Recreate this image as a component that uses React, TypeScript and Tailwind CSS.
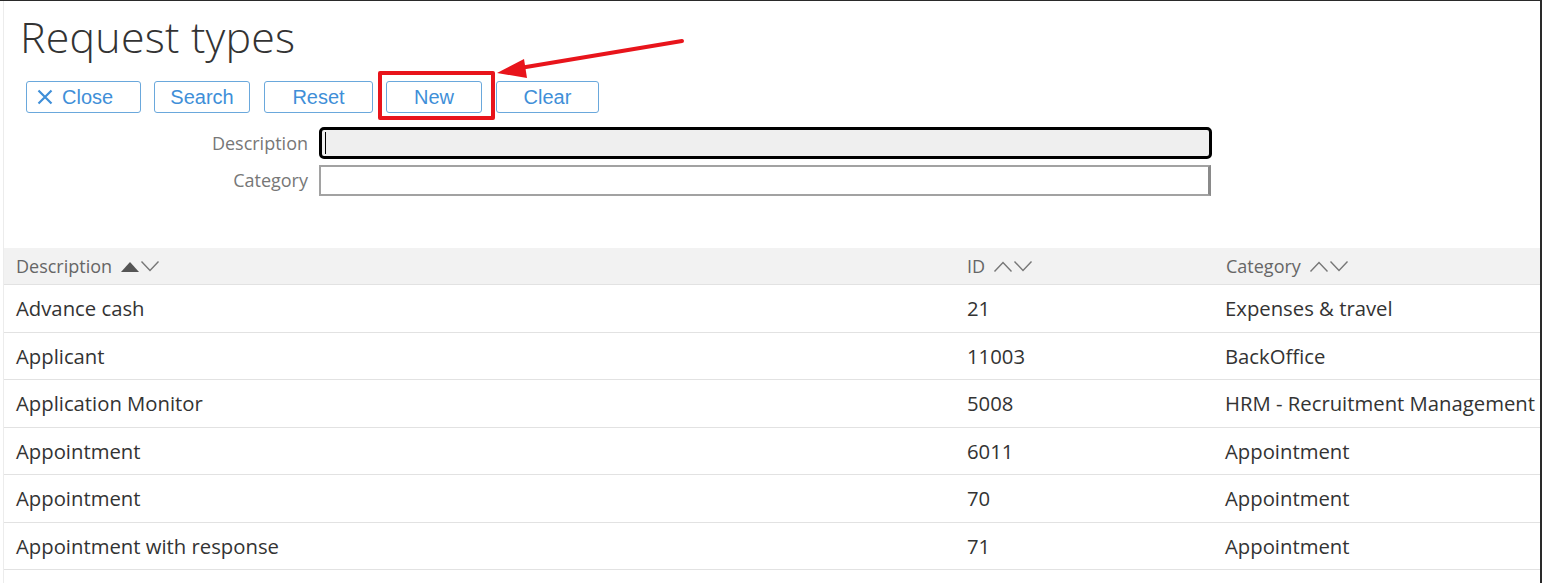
import React from "react";

const font = { fontFamily: '"Open Sans", "Noto Sans", sans-serif' };

function Up({ filled }: { filled?: boolean }) {
  return filled ? (
    <svg width="20" height="13" viewBox="0 0 20 13" className="inline-block">
      <path d="M1 12 L10 2 L19 12 Z" fill="#555" />
    </svg>
  ) : (
    <svg width="20" height="13" viewBox="0 0 20 13" className="inline-block">
      <path d="M1.5 11.5 L10 2.5 L18.5 11.5" fill="none" stroke="#777" strokeWidth="1.4" />
    </svg>
  );
}
function Down() {
  return (
    <svg width="20" height="13" viewBox="0 0 20 13" className="inline-block">
      <path d="M1.5 1.5 L10 10.5 L18.5 1.5" fill="none" stroke="#777" strokeWidth="1.4" />
    </svg>
  );
}

const rows = [
  ["Advance cash", "21", "Expenses & travel"],
  ["Applicant", "11003", "BackOffice"],
  ["Application Monitor", "5008", "HRM - Recruitment Management"],
  ["Appointment", "6011", "Appointment"],
  ["Appointment", "70", "Appointment"],
  ["Appointment with response", "71", "Appointment"],
];

function Btn({ children, w, left }: { children: React.ReactNode; w: string; left?: boolean }) {
  return (
    <button
      className={`${w} h-[32px] border border-[#6aa8dc] rounded-[3px] bg-white text-[#3f8fd8] text-[20px] flex items-center ${left ? "justify-start pl-[10px] gap-[9px]" : "justify-center"}`}
      style={{ fontFamily: '"Liberation Sans", Arial, sans-serif' }}
    >
      {children}
    </button>
  );
}

export default function App() {
  return (
    <div className="relative w-[1542px] h-[583px] overflow-hidden bg-white border-t border-t-[#2a2a2a] border-r-2 border-r-[#2a2a2a]" style={font}>
      <div className="h-full ml-[3px] border-l border-l-[#ececec]">
        <h1 className="pl-[16px] pt-[10px] text-[43px] leading-[52px] font-light text-[#333] tracking-[0.2px]">Request types</h1>
        <div className="flex pl-[22px] mt-[18px] gap-0">
          <Btn w="w-[115px]" left>
            <svg width="16" height="16" viewBox="0 0 16 16"><path d="M1.5 1.5 L14.5 14.5 M14.5 1.5 L1.5 14.5" stroke="#3f8fd8" strokeWidth="2.2" /></svg>
            <span>Close</span>
          </Btn>
          <div className="ml-[13px]"><Btn w="w-[96px]">Search</Btn></div>
          <div className="ml-[14px]"><Btn w="w-[109px]">Reset</Btn></div>
          <div className="ml-[13px]"><Btn w="w-[96px]">New</Btn></div>
          <div className="ml-[14px]"><Btn w="w-[103px]">Clear</Btn></div>
        </div>
        <div className="mt-[14px] flex flex-col gap-[6px]">
          <div className="flex items-center">
            <label className="w-[315px] text-right pr-[11px] text-[18px] text-[#777]">Description</label>
            <div className="w-[893px] h-[32px] border-[3px] border-black rounded-[5px] bg-[#efefef] flex items-center pl-[3px]">
              <div className="w-[1px] h-[22px] bg-black" />
            </div>
          </div>
          <div className="flex items-center">
            <label className="w-[315px] text-right pr-[11px] text-[18px] text-[#777]">Category</label>
            <div className="w-[892px] h-[31px] border-2 border-[#a2a2a2] border-r-[#8a8a8a] border-r-[3px] bg-white" />
          </div>
        </div>
        <div className="mt-[52px]">
          <div className="flex h-[37px] items-center bg-[#f2f2f2] border-b border-b-[#e2e2e2] text-[18px] text-[#666]">
            <div className="w-[951px] pl-[12px] flex items-center gap-[8px]">
              <span>Description</span>
              <span className="flex items-center"><Up filled /><Down /></span>
            </div>
            <div className="w-[259px] pl-[12px] flex items-center gap-[8px]">
              <span>ID</span>
              <span className="flex items-center"><Up /><Down /></span>
            </div>
            <div className="flex-1 pl-[12px] flex items-center gap-[8px]">
              <span>Category</span>
              <span className="flex items-center"><Up /><Down /></span>
            </div>
          </div>
          {rows.map((r, i) => (
            <div key={i} className="flex h-[47.5px] items-center border-b border-b-[#e2e2e2] text-[20.3px] text-[#333]">
              <div className="w-[951px] pl-[12px] whitespace-nowrap">{r[0]}</div>
              <div className="w-[259px] pl-[12px]">{r[1]}</div>
              <div className="flex-1 pl-[11px] whitespace-nowrap">{r[2]}</div>
            </div>
          ))}
        </div>
      </div>
      <div className="absolute left-[378px] top-[70px] w-[117px] h-[49px] border-[4px] border-[#e8141b] rounded-[2px] pointer-events-none" />
      <svg className="absolute left-0 top-0 pointer-events-none" width="1542" height="583">
        <line x1="682" y1="40" x2="520" y2="67" stroke="#e8141b" strokeWidth="4" strokeLinecap="round" />
        <path d="M497 72 L524 58 L527 77 Z" fill="#e8141b" />
      </svg>
    </div>
  );
}
